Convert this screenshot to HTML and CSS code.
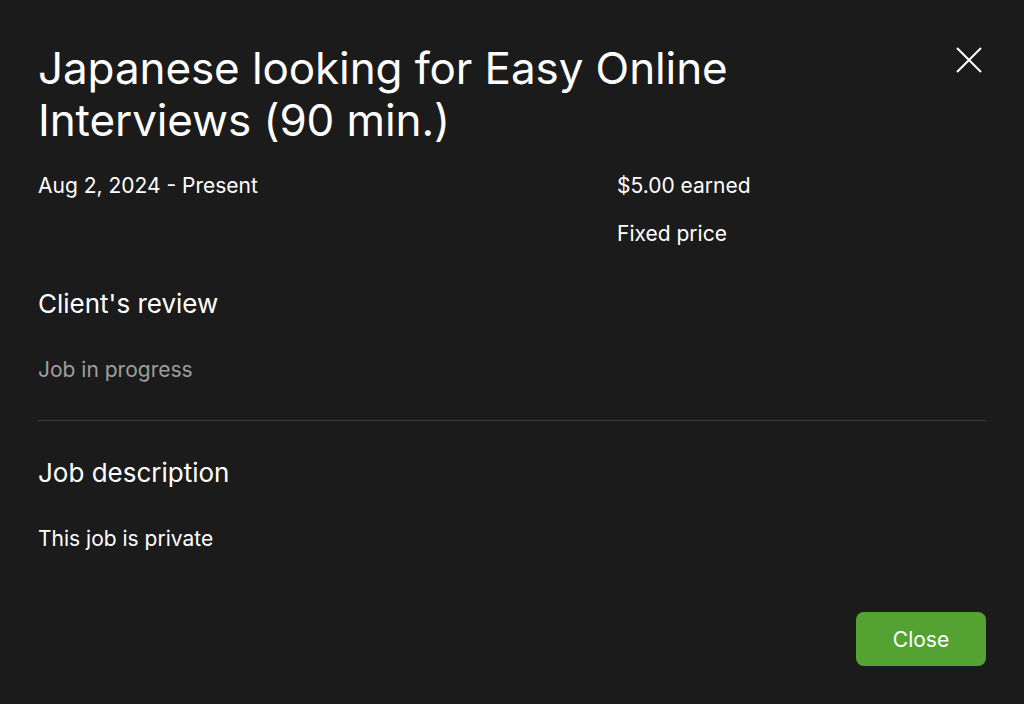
FILE: index.html
```html
<!DOCTYPE html>
<html lang="en">
<head>
    <meta charset="UTF-8">
    <title>Job details</title>
    <link rel="stylesheet" href="styles.css">
</head>
<body>
    <div class="modal">
        <div class="modal-header">
            <h1 class="title">Japanese looking for Easy Online Interviews (90 min.)</h1>
            <button class="icon-close" aria-label="Close">
                <svg width="26" height="26" viewBox="0 0 26 26">
                    <path d="M1 1L25 25M25 1L1 25" stroke="#fff" stroke-width="2" fill="none"/>
                </svg>
            </button>
        </div>
        <div class="meta">
            <div class="meta-col">
                <div>Aug 2, 2024 - Present</div>
            </div>
            <div class="meta-col">
                <div>$5.00 earned</div>
                <div>Fixed price</div>
            </div>
        </div>
        <section class="section">
            <h2>Client's review</h2>
            <p class="muted">Job in progress</p>
        </section>
        <hr class="divider">
        <section class="section">
            <h2>Job description</h2>
            <p>This job is private</p>
        </section>
        <div class="footer">
            <button class="btn-primary">Close</button>
        </div>
    </div>
</body>
</html>
```

FILE: styles.css
```css
body {
    margin: 0;
    background: #1b1b1b;
    color: #fff;
    font-family: Inter, "Liberation Sans", Arial, sans-serif;
}
.modal {
    padding: 42px 38px 38px 38px;
    height: 704px;
    box-sizing: border-box;
    display: flex;
    flex-direction: column;
}
.modal-header {
    display: flex;
    justify-content: space-between;
    align-items: flex-start;
}
.title {
    margin: 0;
    font-size: 44px;
    font-weight: 400;
    line-height: 52px;
    max-width: 780px;
    letter-spacing: -0.1px;
}
.icon-close {
    background: none;
    border: none;
    padding: 0;
    margin: 5px 4px 0 0;
    cursor: pointer;
}
.meta {
    display: grid;
    grid-template-columns: 579px 1fr;
    margin-top: 28px;
    font-size: 21px;
    line-height: 24px;
}
.meta-col {
    display: flex;
    flex-direction: column;
    gap: 24px;
}
.section h2 {
    margin: 0;
    font-size: 26px;
    font-weight: 400;
    line-height: 32px;
}
.section p {
    margin: 38px 0 0 0;
    font-size: 21px;
    line-height: 24px;
}
.section {
    margin-top: 42px;
}
.muted {
    color: #9e9e9e;
}
.divider {
    border: none;
    border-top: 1px solid #3a3a3a;
    margin: 38px 0 0 0;
}
.divider + .section {
    margin-top: 36px;
}
.footer {
    margin-top: auto;
    display: flex;
    justify-content: flex-end;
}
.btn-primary {
    background: #54a332;
    color: #fff;
    border: none;
    border-radius: 8px;
    width: 130px;
    height: 54px;
    font-family: inherit;
    font-size: 21px;
    cursor: pointer;
}
```
